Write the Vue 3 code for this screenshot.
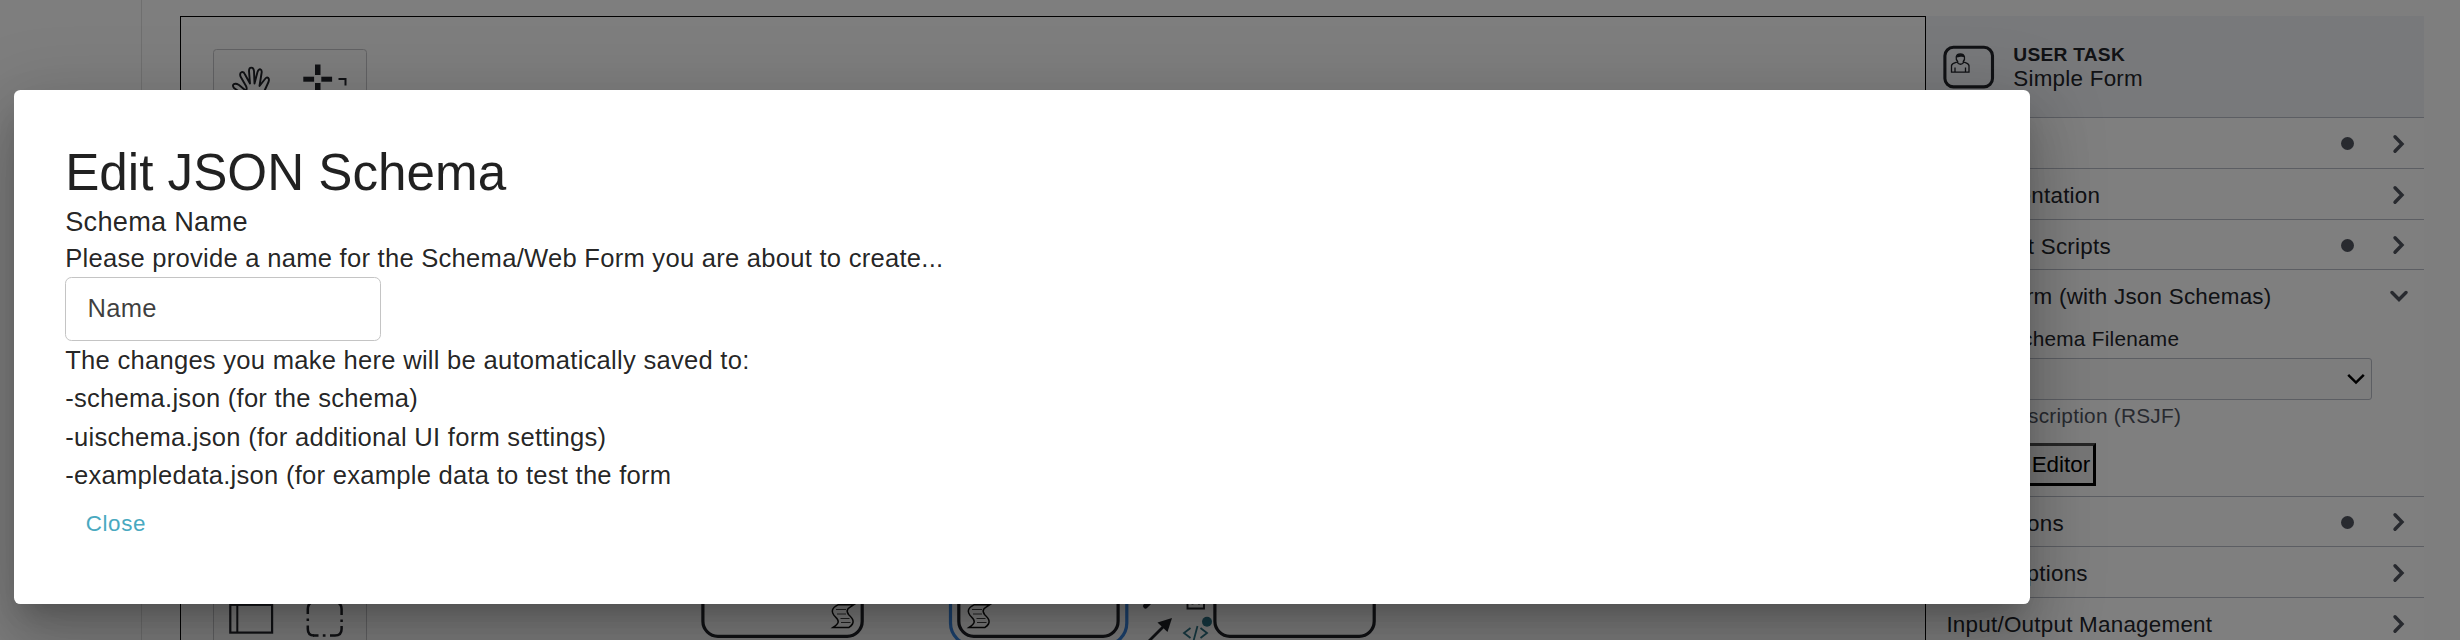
<script setup>
const groupsTop = [
  { label: 'General', dot: true, size: 'h51' },
  { label: 'Documentation', dot: false, size: 'h51' },
  { label: 'Pre/Post Scripts', dot: true, size: 'h50' },
]
const groupsBottom = [
  { label: 'Instructions', dot: true, size: 'h50' },
  { label: 'Guest options', dot: false, size: 'h51' },
  { label: 'Input/Output Management', dot: false, size: 'h51' },
]
const savedFiles = [
  '-schema.json (for the schema)',
  '-uischema.json (for additional UI form settings)',
  '-exampledata.json (for example data to test the form',
]
</script>

<template>
  <div class="page">
    <div class="workspace">
      <aside class="sidebar"></aside>
      <main class="editor">
        <section class="canvas">
          <svg class="diagram" width="1745" height="640" viewBox="181 17 1745 640" fill="none">
            <!-- palette -->
            <rect x="213.5" y="49.5" width="153" height="640" rx="3" fill="#fafafa" stroke="#c4c4c8" />
            <g stroke="#22242a" stroke-width="1.9" stroke-linecap="round" stroke-linejoin="round">
              <path d="M243 95 C240 91 237 90.500 234 88 C231 84 235 82.500 239 85 L245 90 C247 91 247 88 246 86 L240.500 76.500 C239 71.500 243.500 70.500 245 74.500 L250 83.500 L249 71 C249 66.500 253.500 66.500 254 71 L254.500 83.500 L257.500 72 C259 67.500 262.500 69 261.500 73.500 L259.500 86 L265 79 C267 76 270 78 268.500 82 L263 94" />
            </g>
            <g fill="#22242a">
              <rect x="315" y="64.500" width="5.500" height="10.500" />
              <rect x="315" y="83" width="5.500" height="11" />
              <rect x="303.300" y="76.700" width="10.800" height="5" />
              <rect x="321.300" y="76.700" width="10.800" height="5" />
            </g>
            <path d="M338.500 79 H345.500 V85.500" stroke="#22242a" stroke-width="2" />
            <rect x="230.300" y="604.800" width="41.800" height="27.800" stroke="#22242a" stroke-width="2.200" />
            <path d="M237.300 605 V632" stroke="#22242a" stroke-width="2" />
            <g stroke="#22242a" stroke-width="2.500">
              <path d="M307.800 614 V609 Q307.800 604 312 602" />
              <path d="M341.600 615 V609 Q341.600 604 337 602" />
              <path d="M307.800 618.500 V621 M341.600 619.500 V622" />
              <path d="M307.800 625.500 V629 Q307.800 635.500 314 635.500" />
              <path d="M341.600 626 V629 Q341.600 635.500 335 635.500 H330" />
              <path d="M313 635.500 H318.500 M322.800 635.500 H325.500" />
            </g>
            <!-- tasks -->
            <g stroke="#22242a" stroke-width="3.200">
              <rect x="702.900" y="509" width="159.300" height="127.300" rx="15" fill="#fff" />
              <rect x="958.800" y="509" width="159.300" height="127.300" rx="15" fill="#fff" />
              <rect x="1214.900" y="509" width="159.300" height="127.300" rx="15" fill="#fff" />
            </g>
            <rect x="950.500" y="501" width="176.300" height="144" rx="22" stroke="#3a86e0" stroke-width="3.200" />
            <g v-for="x in [831.5, 967.5]" :key="x" :transform="`translate(${x} 604)`">
              <path d="M6.500 0.800 H22 C16 4.500 14 6 17 10.500 C22 15 24 19 17.500 23.400 H1.500 C8 19 8 17 4 13 C-1 8 0 4 6.500 0.800 Z" stroke="#111" stroke-width="1.500" />
              <path d="M4.500 5.500 H14.500 M5.500 10 H14.500 M9 14.500 H18 M9.500 18.500 H19" stroke="#444" stroke-width="1.200" />
            </g>
            <!-- context pad -->
            <path d="M1145.500 606 L1151 600.500" stroke="#22242a" stroke-width="5" stroke-linecap="round" />
            <path d="M1187.500 600 V608.500 H1204 V600 M1192.500 600 V604.500 M1199 600 V604.500" stroke="#22242a" stroke-width="1.900" />
            <path d="M1148 642 L1164 626" stroke="#22242a" stroke-width="2.800" />
            <path d="M1172 618 L1167.500 632 L1157.500 622.500 Z" fill="#22242a" />
            <circle cx="1216.500" cy="621.700" r="5" transform="translate(-9.500 0)" fill="#2f7486" />
            <path d="M1190.500 628 L1184 633 L1190.500 638 M1200.500 628 L1207 633 L1200.500 638 M1197.500 626 L1193.500 641" stroke="#2f7486" stroke-width="1.800" />
          </svg>
        </section>

        <section class="panel">
          <header class="panel-head">
            <svg class="task-icon" width="52" height="44" viewBox="0 0 52 44" fill="none" stroke="#22242a">
              <rect x="1.900" y="2.300" width="47.600" height="39.600" rx="8.500" stroke-width="3.100" />
              <g stroke-width="1.300">
                <path d="M8.500 27.200 V20.500 C9 18 12 17.800 14.500 17 C15 20 20 20 20.500 17 C23 17.800 25.500 18 26 20.500 V27.200 Z M12 27 V22.500 M22.500 27 V22.500" />
                <path d="M15 17 C12 14 12.500 9 17.300 9 C22 9 22.800 14 20 17" />
              </g>
              <path d="M13.300 12.500 C13.500 8.500 21 7.800 21.800 12.500 C18 10.800 16 12.800 13.300 12.500 Z" fill="#22242a" stroke="none" />
            </svg>
            <div class="head-text">
              <div class="head-type">USER TASK</div>
              <div class="head-name">Simple Form</div>
            </div>
          </header>

          <div v-for="g in groupsTop" :key="g.label" class="group" :class="g.size">
            <span class="label">{{ g.label }}</span>
            <i v-if="g.dot" class="dot"></i>
            <svg class="arrow" width="18" height="20" viewBox="0 0 18 20">
              <path d="M5 2.800 L12 10 L5 17.200" />
            </svg>
          </div>

          <div class="open-group">
            <div class="group h50 open">
              <span class="label">Web Form (with Json Schemas)</span>
              <svg class="arrow" width="18" height="20" viewBox="0 0 18 20">
                <path d="M2 6.500 L9 13.500 L16 6.500" />
              </svg>
            </div>
            <div class="entry-label">JSON Schema Filename</div>
            <div class="select">
              <svg width="20" height="12" viewBox="0 0 20 12">
                <path d="M2.200 1.800 L10 9.600 L17.800 1.800" fill="none" stroke="#000" stroke-width="2.500" />
              </svg>
            </div>
            <div class="entry-desc">Form Description (RSJF)</div>
            <button class="launch">Launch Editor</button>
          </div>

          <div v-for="g in groupsBottom" :key="g.label" class="group" :class="g.size">
            <span class="label">{{ g.label }}</span>
            <i v-if="g.dot" class="dot"></i>
            <svg class="arrow" width="18" height="20" viewBox="0 0 18 20">
              <path d="M5 2.800 L12 10 L5 17.200" />
            </svg>
          </div>
        </section>
      </main>
    </div>

    <div class="backdrop"></div>

    <div class="modal" role="dialog">
      <h2 class="title">Edit JSON Schema</h2>
      <div class="subtitle">Schema Name</div>
      <p class="line">Please provide a name for the Schema/Web Form you are about to create...</p>
      <div class="field">Name</div>
      <p class="line">The changes you make here will be automatically saved to:</p>
      <p v-for="f in savedFiles" :key="f" class="line">{{ f }}</p>
      <button class="close">Close</button>
    </div>
  </div>
</template>

<style>
html,
body {
  margin: 0;
  overflow: hidden;
}
</style>

<style scoped>
.page {
  position: relative;
  width: 2460px;
  height: 640px;
  overflow: hidden;
  box-sizing: border-box;
  background: #fcfcfc;
  font-family: "Liberation Sans", Arial, Helvetica, sans-serif;
  color: #22242a;
}
.page * {
  box-sizing: border-box;
}
.workspace {
  display: flex;
  height: 640px;
}
.sidebar {
  flex: none;
  width: 142px;
  border-right: 1px solid #dedede;
}
.editor {
  display: flex;
  padding: 16px 0 0 38px;
  height: 640px;
}
.canvas {
  flex: none;
  width: 1746px;
  height: 700px;
  border: 1px solid #000;
  overflow: hidden;
}
.diagram {
  display: block;
}
.panel {
  flex: none;
  width: 498px;
  height: 700px;
  background: #fff;
  letter-spacing: 0.25px;
}
.panel-head {
  display: flex;
  height: 102px;
  padding: 28.5px 0 0 17px;
  background: #f1f3f6;
  border-bottom: 1px solid #b9bcc6;
}
.task-icon {
  flex: none;
}
.head-text {
  margin-top: -0.5px;
  padding-left: 18.3px;
}
.head-type {
  font-size: 19.2px;
  line-height: 22px;
  font-weight: 700;
}
.head-name {
  font-size: 22.4px;
  line-height: 26px;
}
.group {
  display: flex;
  align-items: center;
  padding: 1px 15.600px 0 20.400px;
  border-bottom: 1px solid #b9bcc6;
}
.h50 {
  height: 50px;
}
.h51 {
  height: 51px;
}
.label {
  flex: 1;
  font-size: 22.4px;
  line-height: 26px;
  padding-top: 3px;
}
.dot {
  width: 13px;
  height: 13px;
  margin-right: 36px;
  border-radius: 50%;
  background: #50545f;
}
.arrow {
  fill: none;
  stroke: #50545f;
  stroke-width: 3.4;
  stroke-linecap: round;
}
.open-group {
  height: 227px;
  border-bottom: 1px solid #b9bcc6;
}
.group.open {
  border-bottom: 0;
}
.entry-label {
  height: 38px;
  padding: 7px 0 0 19.4px;
  font-size: 20.8px;
  line-height: 24px;
}
.select {
  display: flex;
  align-items: center;
  justify-content: flex-end;
  width: 426px;
  height: 42px;
  margin-left: 20px;
  padding-right: 5px;
  background: #fafafa;
  border: 1px solid #b9bcc6;
  border-radius: 3px;
}
.entry-desc {
  height: 43px;
  padding: 4px 0 0 19.4px;
  font-size: 20.8px;
  line-height: 24px;
  color: #50545f;
}
.launch {
  display: block;
  margin: 0 0 0 20px;
  width: 150px;
  height: 43px;
  padding: 0 3px;
  background: #efefef;
  border: 3px solid #000;
  border-top-color: #4c4c4c;
  border-left-color: #4c4c4c;
  border-radius: 0;
  font: 22.4px/36px "Liberation Sans", Arial, sans-serif;
  color: #000;
  text-align: right;
  white-space: nowrap;
}
.backdrop {
  position: absolute;
  inset: 0;
  background: rgba(0, 0, 0, 0.5);
}
.modal {
  position: absolute;
  left: 14px;
  top: 90px;
  width: 2016px;
  height: 514px;
  padding: 51.2px;
  border-radius: 6.4px;
  background: #fff;
  color: rgba(0, 0, 0, 0.87);
  font-size: 25.6px;
  letter-spacing: 0.25px;
  box-shadow:
    0 17.6px 24px -11.2px rgba(0, 0, 0, 0.2),
    0 38.4px 60.8px 4.8px rgba(0, 0, 0, 0.14),
    0 14.4px 73.6px 12.8px rgba(0, 0, 0, 0.12);
}
.title {
  margin: 0;
  font-size: 51.2px;
  line-height: 63.4px;
  font-weight: 400;
  letter-spacing: 0;
}
.subtitle {
  font-size: 27.2px;
  line-height: 34px;
}
.line {
  margin: 0;
  line-height: 38.4px;
}
.field {
  width: 316px;
  height: 63.8px;
  padding-left: 21.4px;
  line-height: 61.5px;
  border: 1px solid #c4c4c4;
  border-radius: 6.4px;
  color: rgba(0, 0, 0, 0.75);
}
.close {
  display: block;
  height: 58.4px;
  padding: 1px 20.5px 0;
  border: 0;
  background: none;
  font: 22.4px/57.4px "Liberation Sans", Arial, sans-serif;
  letter-spacing: 0.64px;
  color: #49a9c0;
}
</style>
